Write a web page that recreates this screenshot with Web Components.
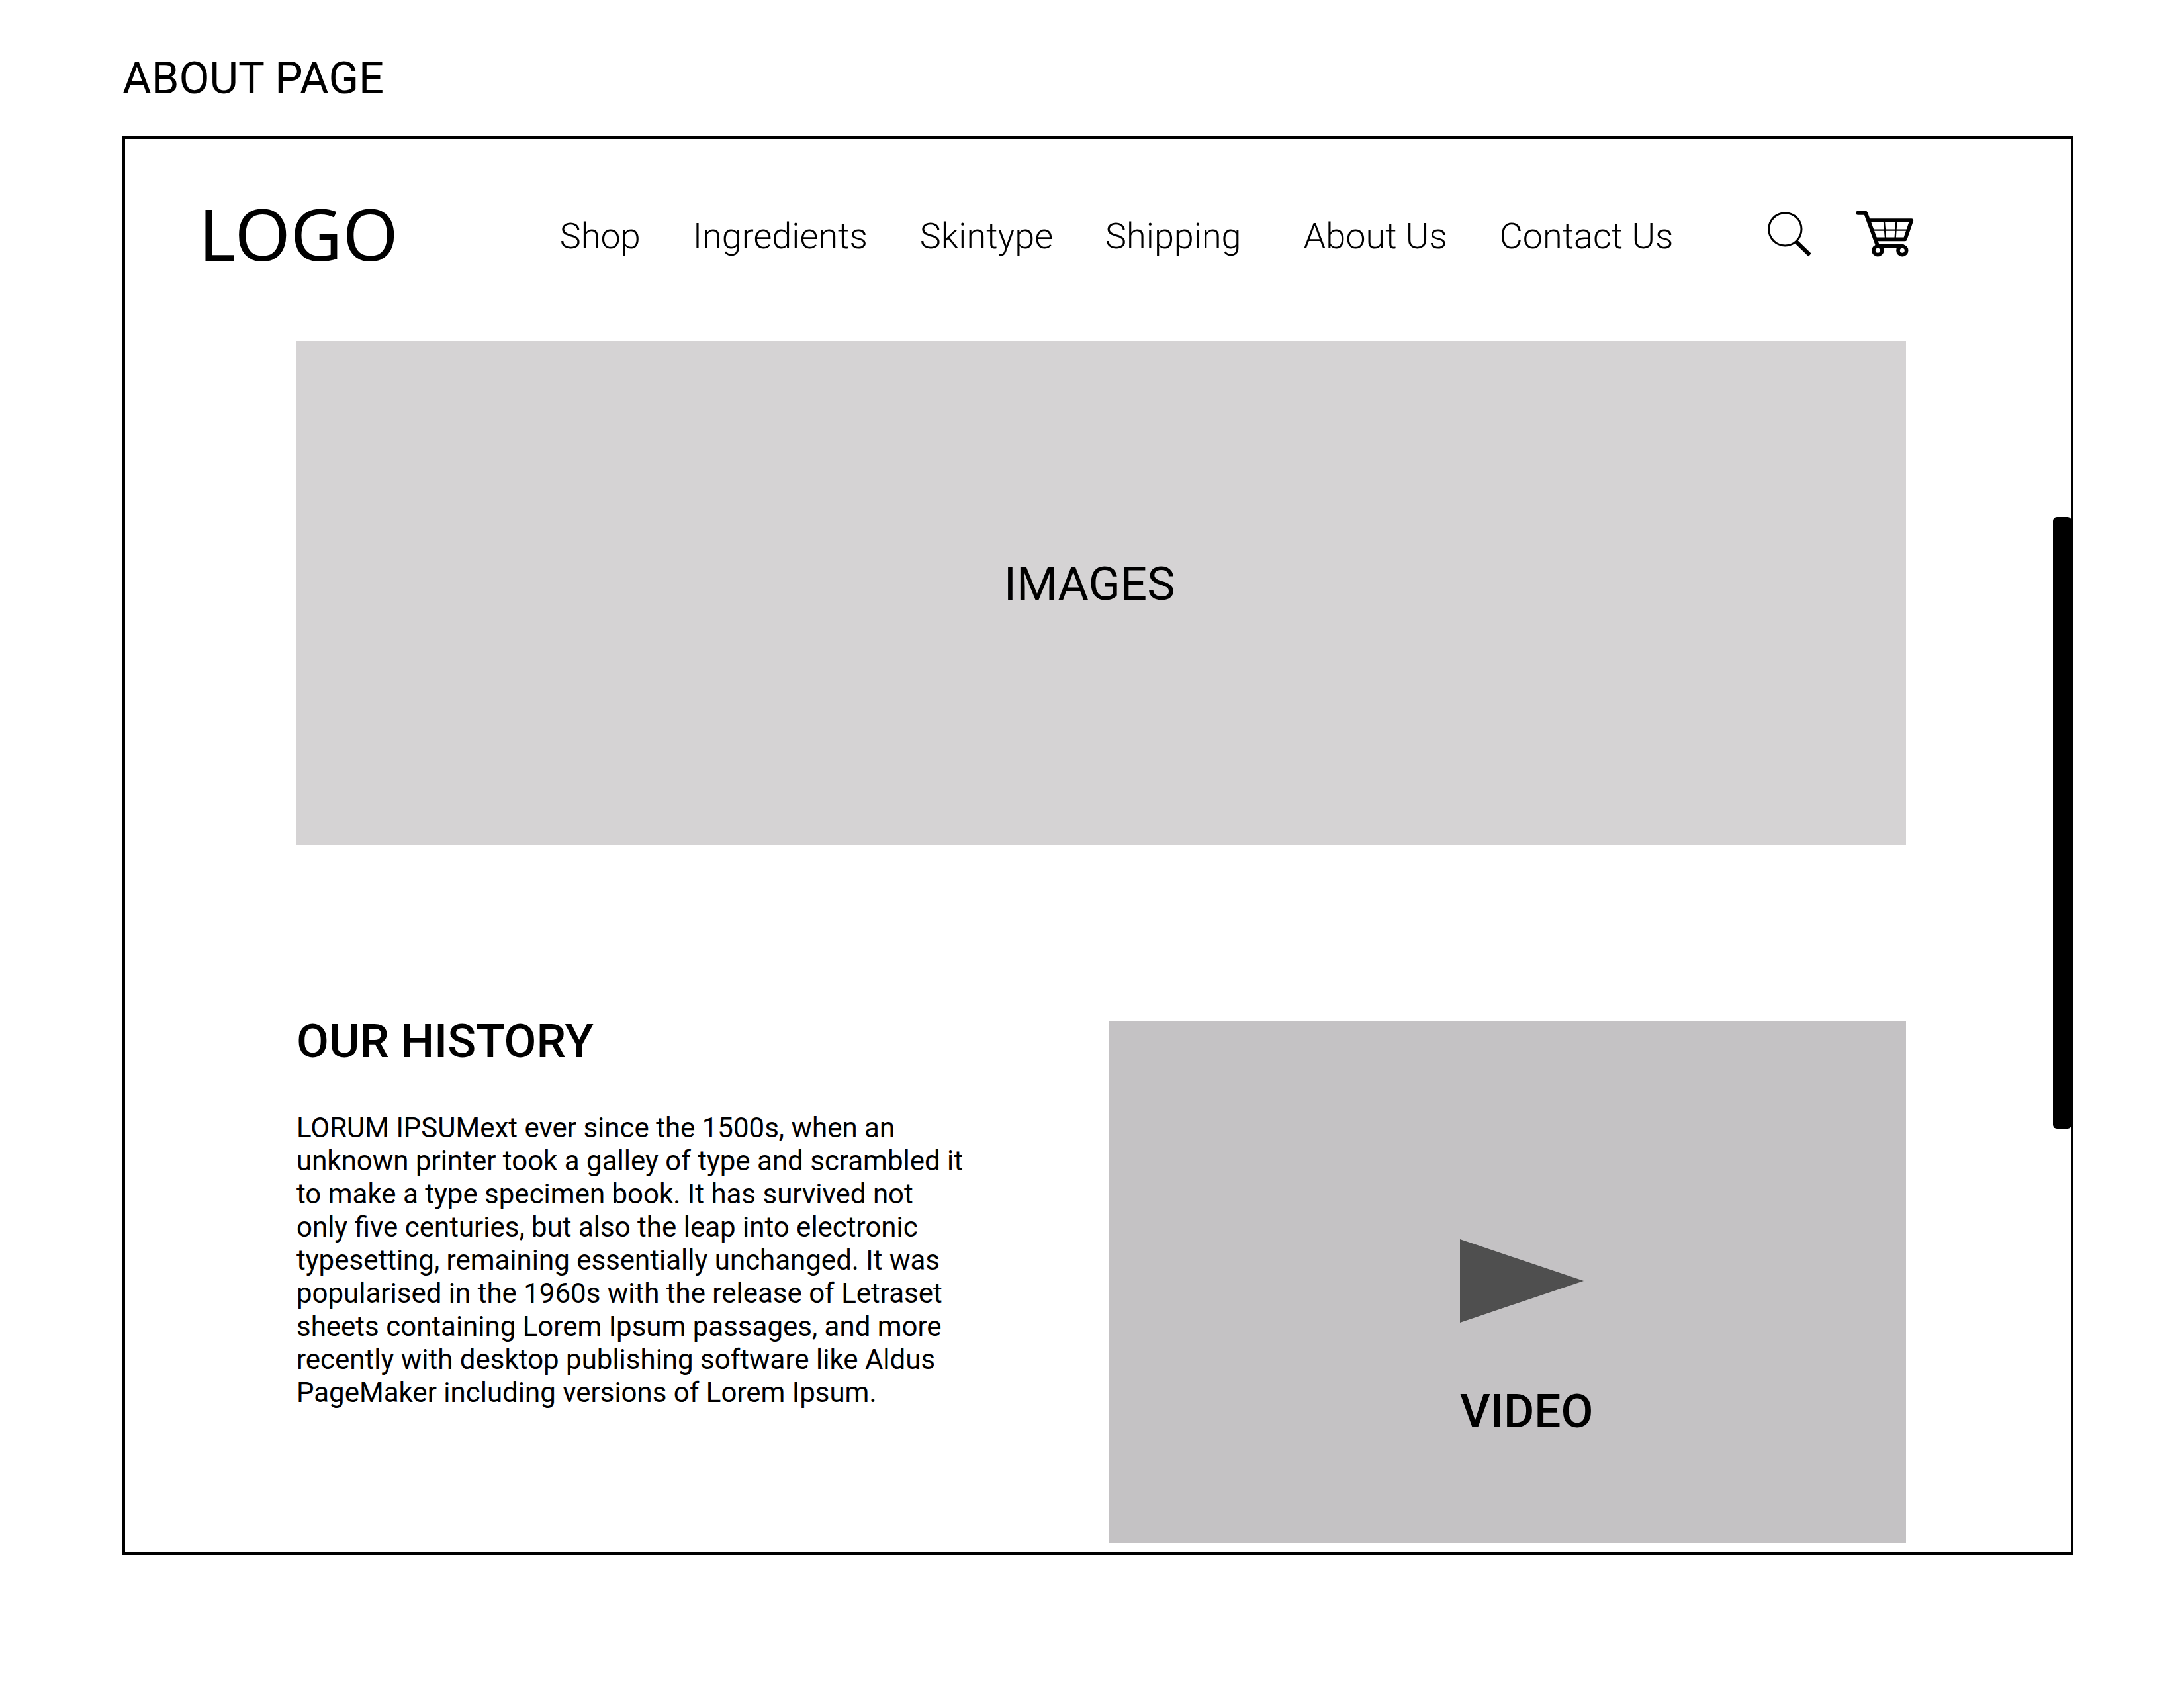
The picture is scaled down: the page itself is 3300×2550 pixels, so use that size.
<!DOCTYPE html>
<html lang="en">
<head>
<meta charset="utf-8">
<meta name="viewport" content="width=device-width, initial-scale=1">
<title>About page</title>
<style>
  body {
    margin: 0;
    background: #fff;
    color: #000;
    font-family: Roboto, sans-serif;
  }
</style>
</head>
<body>
<about-page></about-page>

<template id="about-page">
  <style>
    :host { display: block; padding: 78px 167px 78px 185px; }
    h1 { margin: 0 0 48px; font-size: 67px; line-height: 80px; font-weight: 400; }
    main { padding: 0 249px 14px 259px; }
    .story {
      display: grid;
      grid-template-columns: 1229fr 1204fr;
      align-items: start;
      margin-top: 265px;
    }
  </style>
  <h1>ABOUT PAGE</h1>
  <page-frame>
    <site-header></site-header>
    <main>
      <image-placeholder>IMAGES</image-placeholder>
      <div class="story">
        <text-block>
          <span slot="title">OUR HISTORY</span>
          LORUM IPSUMext ever since the 1500s, when an unknown printer took a galley of type and scrambled it to make a type specimen book. It has survived not only five centuries, but also the leap into electronic typesetting, remaining essentially unchanged. It was popularised in the 1960s with the release of Letraset sheets containing Lorem Ipsum passages, and more recently with desktop publishing software like Aldus PageMaker including versions of Lorem Ipsum.
        </text-block>
        <video-placeholder>VIDEO</video-placeholder>
      </div>
    </main>
  </page-frame>
</template>

<template id="page-frame">
  <style>
    :host { display: block; position: relative; border: 4px solid #000; }
    /* scroll thumb lying over the right border */
    .thumb {
      position: absolute;
      top: 571px;
      right: -1px;
      width: 28px;
      height: 924px;
      border-radius: 6px;
      background: #000;
    }
  </style>
  <slot></slot>
  <div class="thumb"></div>
</template>

<template id="site-header">
  <style>
    :host { display: block; }
    header {
      display: flex;
      align-items: center;
      padding: 82px 237px 93px 111px;
    }
    .logo {
      padding-bottom: 8px;
      font-family: "Noto Sans", sans-serif;
      font-size: 108px;
      line-height: 122px;
    }
    a { color: inherit; text-decoration: none; }
    nav { display: flex; gap: 94px; margin-left: 244px; }
    ul { display: flex; gap: 79px; margin: 0; padding: 0; list-style: none; }
    nav a { font-size: 54px; line-height: 64px; font-weight: 300; white-space: nowrap; }
    .tools { display: flex; gap: 66px; margin-left: auto; }
    button { display: block; margin: 0; padding: 0; border: 0; background: none; color: inherit; }
    svg { display: block; height: 80px; }
    .search { width: 67px; }
    .cart { width: 88px; }
  </style>
  <header>
    <a class="logo" href="#">LOGO</a>
    <nav aria-label="Main">
      <ul>
        <li><a href="#shop">Shop</a></li>
        <li><a href="#ingredients">Ingredients</a></li>
        <li><a href="#skintype">Skintype</a></li>
        <li><a href="#shipping">Shipping</a></li>
      </ul>
      <ul>
        <li><a href="#about">About Us</a></li>
        <li><a href="#contact">Contact Us</a></li>
      </ul>
    </nav>
    <div class="tools">
      <button type="button" aria-label="Search">
        <svg class="search" viewBox="92 81 201 240" fill="none" stroke="#000">
          <circle cx="171" cy="169" r="74" stroke-width="9"/>
          <path d="M221 225L283 285" stroke-width="18"/>
        </svg>
      </button>
      <button type="button" aria-label="Cart">
        <svg class="cart" viewBox="492 81 264 240" fill="none" stroke="#000" stroke-linejoin="round" stroke-linecap="round">
          <path d="M502 95H537L590 240" stroke-width="18"/>
          <path d="M556 129H745L716 214H584" stroke-width="17"/>
          <path d="M571 173H728M621 137L627 208M676 137L671 208" stroke-width="7"/>
          <path d="M592 246H705" stroke-width="18"/>
          <circle cx="592" cy="265" r="19" stroke-width="17" fill="#fff"/>
          <circle cx="703" cy="265" r="19" stroke-width="17" fill="#fff"/>
        </svg>
      </button>
    </div>
  </header>
</template>

<template id="image-placeholder">
  <style>
    :host {
      display: flex;
      align-items: center;
      justify-content: center;
      box-sizing: border-box;
      height: 762px;
      padding: 0 36px 28px 0;
      background: #d5d3d4;
      font-size: 71px;
      line-height: 80px;
    }
  </style>
  <span><slot></slot></span>
</template>

<template id="text-block">
  <style>
    :host { display: block; }
    h2 { margin: 0 0 75px; font-size: 71px; line-height: 62px; font-weight: 500; }
    p { margin: 0; max-width: 1012px; font-size: 42px; line-height: 50px; }
  </style>
  <h2><slot name="title"></slot></h2>
  <p><slot></slot></p>
</template>

<template id="video-placeholder">
  <style>
    :host {
      display: flex;
      flex-direction: column;
      align-items: flex-start;
      gap: 94px;
      box-sizing: border-box;
      height: 789px;
      padding: 330px 0 0 44%;
      background: #c4c2c4;
      font-size: 71px;
      line-height: 80px;
      font-weight: 500;
    }
    button { display: block; margin: 0; padding: 0; border: 0; background: none; }
    svg { display: block; width: 187px; height: 126px; }
  </style>
  <button type="button" aria-label="Play video">
    <svg viewBox="0 0 187 126"><path d="M0 0L187 63L0 126Z" fill="#4f4f4f"/></svg>
  </button>
  <span><slot></slot></span>
</template>

<script>
  class TemplateElement extends HTMLElement {
    constructor() {
      super();
      const template = document.getElementById(this.localName);
      this.attachShadow({ mode: "open" }).append(template.content.cloneNode(true));
    }
  }
  customElements.define("page-frame", class extends TemplateElement {});
  customElements.define("site-header", class extends TemplateElement {});
  customElements.define("image-placeholder", class extends TemplateElement {});
  customElements.define("text-block", class extends TemplateElement {});
  customElements.define("video-placeholder", class extends TemplateElement {});
  customElements.define("about-page", class extends TemplateElement {});
</script>
</body>
</html>
